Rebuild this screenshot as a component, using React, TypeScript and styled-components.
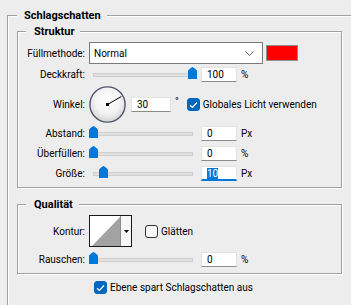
import React from "react";
import styled, { createGlobalStyle } from "styled-components";

const GlobalStyle = createGlobalStyle`
  html, body {
    margin: 0;
    padding: 0;
    background: #ededed;
    overflow: hidden;
  }
  body {
    font-family: Roboto, "Liberation Sans", sans-serif;
    font-size: 10px;
    color: #000;
  }
`;

const Page = styled.div`
  width: 351px;
  height: 305px;
  box-sizing: border-box;
  padding: 8px 0 0 7px;
  overflow: hidden;
`;

const OuterGroup = styled.fieldset`
  margin: 0;
  padding: 1px 0 40px 9px;
  width: 420px;
  box-sizing: border-box;
  border: 1px solid #a0a0a0;
  box-shadow: 1px 1px 0 #fff, inset 1px 1px 0 #fff;
  min-inline-size: 0;
`;

const Section = styled.fieldset<{ $mt?: number; $pb: number }>`
  margin: ${p => p.$mt ?? 0}px 0 0 0;
  padding: 0 0 ${p => p.$pb}px 0;
  width: 325px;
  box-sizing: border-box;
  border: 1px solid #a0a0a0;
  box-shadow: 1px 1px 0 #fff, inset 1px 1px 0 #fff;
  min-inline-size: 0;
`;

const Legend = styled.legend<{ $inner?: boolean }>`
  font-size: 11px;
  font-weight: bold;
  line-height: 15px;
  background: #ededed;
  margin-left: ${p => (p.$inner ? 8 : 0)}px;
  padding: 0 6px 0 ${p => (p.$inner ? 8 : 7)}px;
`;

const Row = styled.div<{ $mt: number; $h: number }>`
  display: flex;
  align-items: center;
  height: ${p => p.$h}px;
  margin-top: ${p => p.$mt}px;
`;

const Label = styled.span`
  flex: none;
  width: 67px;
  margin-right: 4px;
  text-align: right;
  white-space: nowrap;
`;

const Select = styled.div`
  flex: none;
  width: 174px;
  height: 22px;
  box-sizing: border-box;
  display: flex;
  align-items: center;
  justify-content: space-between;
  padding: 0 8px 0 4px;
  background: #fff;
  border: 1px solid #7a7a7a;
`;

const Swatch = styled.div<{ $color: string }>`
  flex: none;
  width: 32px;
  height: 16px;
  margin-left: 3px;
  box-sizing: border-box;
  background: ${p => p.$color};
  border: 1px solid #8f8f8f;
`;

const SliderBox = styled.div`
  position: relative;
  flex: none;
  width: 108px;
  height: 15px;
`;

const Track = styled.div`
  margin: 6px 4px 0 4px;
  height: 2px;
  background: #e0e0e0;
  border: 1px solid #d0d0d0;
`;

const Thumb = styled.svg`
  position: absolute;
  top: 0;
`;

const NumberField = styled.div<{ $w?: number; $active?: boolean; $ml?: number }>`
  flex: none;
  width: ${p => p.$w ?? 36}px;
  height: 15px;
  margin-left: ${p => p.$ml ?? 4}px;
  box-sizing: border-box;
  padding-left: 5px;
  background: #fff;
  border: 1px solid #e2e2e2;
  border-bottom: ${p => (p.$active ? "2px solid #0078d7" : "1px solid #8c8c8c")};
  line-height: 13px;
`;

const Selected = styled.span`
  background: #0078d7;
  color: #fff;
`;

const Unit = styled.span<{ $raise?: boolean }>`
  margin-left: 4px;
  margin-bottom: ${p => (p.$raise ? 7 : 0)}px;
`;

const CheckLabel = styled.label<{ $ml: number }>`
  display: flex;
  align-items: center;
  gap: 3px;
  margin-left: ${p => p.$ml}px;
`;

const Box = styled.span<{ $on?: boolean }>`
  flex: none;
  width: 13px;
  height: 13px;
  box-sizing: border-box;
  border-radius: 3px;
  display: inline-flex;
  align-items: center;
  justify-content: center;
  background: ${p => (p.$on ? "#0067c0" : "#f7f7f7")};
  border: 1px solid ${p => (p.$on ? "#0067c0" : "#333")};
`;

const ContourPicker = styled.div`
  flex: none;
  display: flex;
  width: 43px;
  height: 32px;
  box-sizing: border-box;
  background: #fff;
  border: 1px solid #1a1a1a;
`;

const ContourPreview = styled.svg`
  flex: none;
  border-right: 1px solid #8a8a8a;
`;

const ContourArrow = styled.div`
  flex: 1;
  display: flex;
  align-items: center;
  justify-content: center;
  background: #f7f7f7;
`;

const Footer = styled.div`
  margin: 7px 0 0 77px;
`;

const Slider = ({ pos }: { pos: number }) => (
  <SliderBox>
    <Track />
    <Thumb width="9" height="12" viewBox="0 0 9 12" style={{ left: Math.round(pos * 99) }}>
      <path d="M0 4.2 Q0 3.2 1 2.4 L3.6 0.4 Q4.5 -0.2 5.4 0.4 L8 2.4 Q9 3.2 9 4.2 V12 H0 Z" fill="#0078d7" />
    </Thumb>
  </SliderBox>
);

const Tick = () => (
  <svg width="9" height="8" viewBox="0 0 9 8">
    <path d="M1 4.2 L3.4 6.5 L8 1.5" fill="none" stroke="#fff" strokeWidth="1.2" />
  </svg>
);

const Dial = ({ angle }: { angle: number }) => {
  const r = (angle * Math.PI) / 180;
  const x2 = 18.5 + Math.cos(r) * 16;
  const y2 = 18.5 - Math.sin(r) * 16;
  return (
    <svg width="37" height="37" viewBox="0 0 37 37" style={{ flex: "none" }}>
      <defs>
        <radialGradient id="dialFill" cx="50%" cy="40%" r="60%">
          <stop offset="0%" stopColor="#ffffff" />
          <stop offset="60%" stopColor="#f3f3f3" />
          <stop offset="100%" stopColor="#d4d4d4" />
        </radialGradient>
      </defs>
      <circle cx="18.5" cy="18.5" r="17.6" fill="url(#dialFill)" stroke="#4f566c" strokeWidth="1.4" />
      <line x1="18.5" y1="18.5" x2={x2} y2={y2} stroke="#000" strokeWidth="1" />
      <rect x="17" y="17" width="3" height="3" fill="#000" />
    </svg>
  );
};

const App = () => (
  <>
    <GlobalStyle />
    <Page>
      <OuterGroup>
        <Legend>Schlagschatten</Legend>
        <Section $pb={6}>
          <Legend $inner>Struktur</Legend>
          <Row $mt={3} $h={22}>
            <Label>Füllmethode:</Label>
            <Select>
              <span>Normal</span>
              <svg width="9" height="5" viewBox="0 0 9 5">
                <path d="M0.5 0.5 L4.5 4.5 L8.5 0.5" fill="none" stroke="#555" strokeWidth="1" />
              </svg>
            </Select>
            <Swatch $color="#ff0000" />
          </Row>
          <Row $mt={3} $h={15}>
            <Label>Deckkraft:</Label>
            <Slider pos={1} />
            <NumberField>100</NumberField>
            <Unit>%</Unit>
          </Row>
          <Row $mt={4} $h={37}>
            <Label>Winkel:</Label>
            <Dial angle={30} />
            <NumberField $w={40} $ml={5}>30</NumberField>
            <Unit $raise>°</Unit>
            <CheckLabel $ml={8}>
              <Box $on><Tick /></Box>
              Globales Licht verwenden
            </CheckLabel>
          </Row>
          <Row $mt={3} $h={15}>
            <Label>Abstand:</Label>
            <Slider pos={0} />
            <NumberField>0</NumberField>
            <Unit>Px</Unit>
          </Row>
          <Row $mt={5} $h={15}>
            <Label>Überfüllen:</Label>
            <Slider pos={0} />
            <NumberField>0</NumberField>
            <Unit>%</Unit>
          </Row>
          <Row $mt={5} $h={15}>
            <Label>Größe:</Label>
            <Slider pos={0.1} />
            <NumberField $active><Selected>10</Selected></NumberField>
            <Unit>Px</Unit>
          </Row>
        </Section>
        <Section $mt={9} $pb={6}>
          <Legend $inner>Qualität</Legend>
          <Row $mt={3} $h={32}>
            <Label>Kontur:</Label>
            <ContourPicker>
              <ContourPreview width="30" height="30" viewBox="0 0 30 30">
                <polygon points="2,30 30,1 30,30" fill="#a3a3a3" />
              </ContourPreview>
              <ContourArrow>
                <svg width="5" height="3" viewBox="0 0 5 3">
                  <polygon points="0,0 5,0 2.5,3" fill="#000" />
                </svg>
              </ContourArrow>
            </ContourPicker>
            <CheckLabel $ml={13}>
              <Box />
              Glätten
            </CheckLabel>
          </Row>
          <Row $mt={5} $h={15}>
            <Label>Rauschen:</Label>
            <Slider pos={0} />
            <NumberField>0</NumberField>
            <Unit>%</Unit>
          </Row>
        </Section>
        <Footer>
          <CheckLabel $ml={0}>
            <Box $on><Tick /></Box>
            Ebene spart Schlagschatten aus
          </CheckLabel>
        </Footer>
      </OuterGroup>
    </Page>
  </>
);

export default App;
